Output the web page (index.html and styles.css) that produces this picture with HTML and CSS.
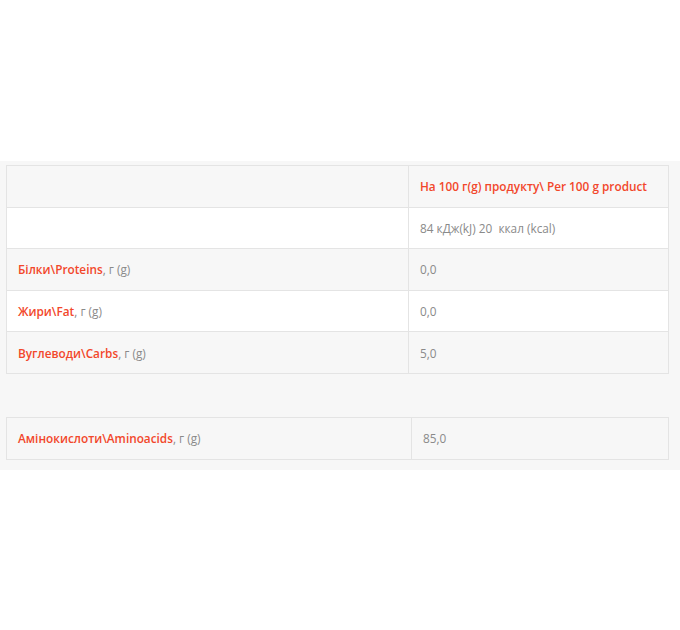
FILE: index.html
```html
<!DOCTYPE html>
<html lang="uk">
<head>
    <meta charset="UTF-8">
    <meta name="viewport" content="width=device-width, initial-scale=1.0">
    <title>Харчова цінність</title>
    <link rel="stylesheet" href="styles.css">
</head>
<body>
    <div class="nutrition">
        <table class="facts">
            <colgroup>
                <col class="name-col">
                <col>
            </colgroup>
            <tr>
                <td></td>
                <td><span class="accent">На 100 г(g) продукту\ Per 100 g product</span></td>
            </tr>
            <tr>
                <td></td>
                <td>84 кДж(kJ) 20&nbsp; ккал (kcal)</td>
            </tr>
            <tr>
                <td><span class="accent">Білки\Proteins</span>, г (g)</td>
                <td>0,0</td>
            </tr>
            <tr>
                <td><span class="accent">Жири\Fat</span>, г (g)</td>
                <td>0,0</td>
            </tr>
            <tr>
                <td><span class="accent">Вуглеводи\Carbs</span>, г (g)</td>
                <td>5,0</td>
            </tr>
        </table>

        <table class="facts facts-single">
            <colgroup>
                <col class="name-col-wide">
                <col>
            </colgroup>
            <tr>
                <td><span class="accent">Амінокислоти\Aminoacids</span>, г (g)</td>
                <td>85,0</td>
            </tr>
        </table>
    </div>
</body>
</html>
```

FILE: styles.css
```css
:root {
    --accent: #f2472b;
    --text-muted: #8a8a8a;
    --band-bg: #f7f7f7;
    --row-alt: #ffffff;
    --line: #e4e4e4;
}

* {
    margin: 0;
    padding: 0;
    box-sizing: border-box;
}

body {
    font-family: 'Open Sans', 'Noto Sans', sans-serif;
    background: #ffffff;
    color: var(--text-muted);
    font-size: 11.8px;
    padding-top: 161px;
}

.nutrition {
    background: var(--band-bg);
    padding: 4px 11px 10px 6px;
}

.facts {
    width: 100%;
    border-collapse: collapse;
    table-layout: fixed;
    border: 1px solid var(--line);
}

.facts td {
    height: 41.6px;
    padding: 0 11px;
    border: 1px solid var(--line);
    vertical-align: middle;
    background: var(--band-bg);
}

.facts tr:nth-child(even) td {
    background: var(--row-alt);
}

.name-col {
    width: 402px;
}

.name-col-wide {
    width: 405px;
}

.facts-single {
    margin-top: 43px;
}

.facts-single td {
    height: 42px;
}

.accent {
    color: var(--accent);
    font-weight: 600;
}
```
